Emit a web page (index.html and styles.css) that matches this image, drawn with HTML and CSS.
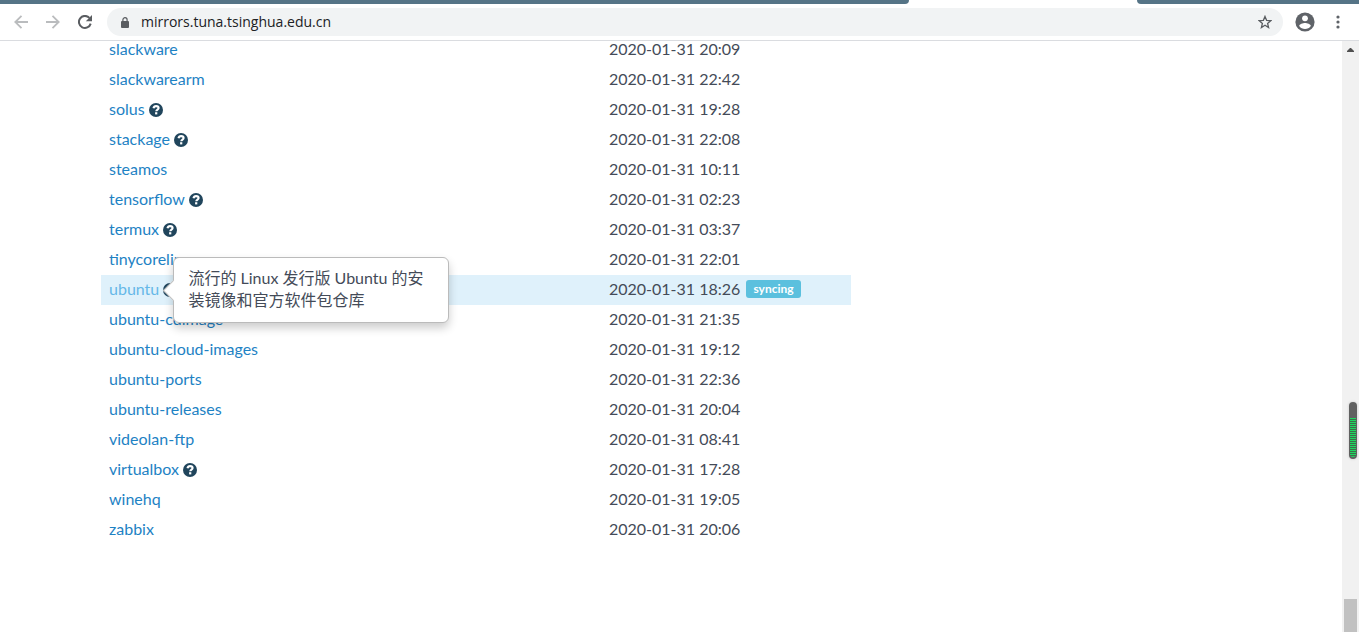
FILE: index.html
```
<!DOCTYPE html>
<html lang="zh-CN">
<head>
    <meta charset="UTF-8">
    <title>mirrors.tuna.tsinghua.edu.cn</title>
    <link rel="stylesheet" href="styles.css">
</head>
<body>
<svg class="defs" width="0" height="0">
    <symbol id="help" viewBox="0 0 14 14">
        <circle cx="7" cy="7" r="7" fill="#20455c"/>
        <path d="M4.5 5.3C4.8 3.8 5.8 3.1 7.1 3.1c1.4 0 2.5.8 2.5 2 0 1.5-2.3 1.5-2.3 3.2" fill="none" stroke="#fff" stroke-width="2.1"/>
        <rect x="6.1" y="9.2" width="2.2" height="2.2" fill="#fff"/>
    </symbol>
</svg>
<div class="tabs">
    <div class="tabs-left"></div>
    <div class="tabs-right"></div>
</div>
<div class="toolbar">
    <button class="nav" aria-label="Back">
        <svg width="14" height="14" viewBox="0 0 14 14" fill="none" stroke="#babcbe" stroke-width="1.8"><path d="M14 7H1.5M7.5 .8L1.3 7l6.2 6.2"/></svg>
    </button>
    <button class="nav" aria-label="Forward">
        <svg width="14" height="14" viewBox="0 0 14 14" fill="none" stroke="#babcbe" stroke-width="1.8"><path d="M0 7h12.5M6.5 .8L12.7 7l-6.2 6.2"/></svg>
    </button>
    <button class="nav" aria-label="Reload">
        <svg width="14" height="14" viewBox="0 0 14 14"><path d="M12.7 8.6A6 6 0 1 1 11.4 2.9" fill="none" stroke="#5a5d61" stroke-width="2"/><path d="M14 0v6.2H7.8z" fill="#5a5d61"/></svg>
    </button>
    <div class="address">
        <svg width="8" height="11" viewBox="0 0 8 11"><rect y="4" width="8" height="7" rx="1" fill="#5a5d61"/><path d="M1.9 4.5V2.8a2.1 2.1 0 0 1 4.2 0v1.7" fill="none" stroke="#5a5d61" stroke-width="1.2"/></svg>
        <input type="text" aria-label="Address" value="mirrors.tuna.tsinghua.edu.cn">
        <button aria-label="Bookmark">
            <svg width="14" height="14" viewBox="0 0 14 14"><path d="M7 1.4l1.6 3.9 4.2.3-3.2 2.8 1 4.1L7 10.3l-3.6 2.2 1-4.1L1.2 5.6l4.2-.3z" fill="none" stroke="#5a5d61" stroke-width="1.3"/></svg>
        </button>
    </div>
    <button class="profile" aria-label="Profile">
        <svg width="20" height="20" viewBox="0 0 20 20"><circle cx="10" cy="10" r="9.6" fill="#5f6368"/><circle cx="10" cy="6.3" r="2.9" fill="#fff"/><path d="M4.2 13.9c0-2 3.9-3 5.8-3s5.8 1 5.8 3a7 7 0 0 1-11.6 0z" fill="#fff"/></svg>
    </button>
    <button class="more" aria-label="Menu">
        <svg width="4" height="14" viewBox="0 0 4 14" fill="#5f6368"><circle cx="2" cy="2" r="1.6"/><circle cx="2" cy="7" r="1.6"/><circle cx="2" cy="12" r="1.6"/></svg>
    </button>
</div>
<div class="window">
    <main class="page">
        <div class="container">
            <table class="mirrors">
                <tr><td><a href="#">slackware</a></td><td>2020-01-31 20:09</td></tr>
                <tr><td><a href="#">slackwarearm</a></td><td>2020-01-31 22:42</td></tr>
                <tr><td><a href="#">solus</a> <svg class="help"><use href="#help"/></svg></td><td>2020-01-31 19:28</td></tr>
                <tr><td><a href="#">stackage</a> <svg class="help"><use href="#help"/></svg></td><td>2020-01-31 22:08</td></tr>
                <tr><td><a href="#">steamos</a></td><td>2020-01-31 10:11</td></tr>
                <tr><td><a href="#">tensorflow</a> <svg class="help"><use href="#help"/></svg></td><td>2020-01-31 02:23</td></tr>
                <tr><td><a href="#">termux</a> <svg class="help"><use href="#help"/></svg></td><td>2020-01-31 03:37</td></tr>
                <tr><td><a href="#">tinycorelinux</a></td><td>2020-01-31 22:01</td></tr>
                <tr class="active">
                    <td>
                        <span class="tip-anchor"><a href="#">ubuntu</a> <svg class="help"><use href="#help"/></svg><span class="popover" role="tooltip">流行的 Linux 发行版 Ubuntu 的安装镜像和官方软件包仓库</span></span>
                    </td>
                    <td>2020-01-31 18:26 <span class="label">syncing</span></td>
                </tr>
                <tr><td><a href="#">ubuntu-cdimage</a></td><td>2020-01-31 21:35</td></tr>
                <tr><td><a href="#">ubuntu-cloud-images</a></td><td>2020-01-31 19:12</td></tr>
                <tr><td><a href="#">ubuntu-ports</a></td><td>2020-01-31 22:36</td></tr>
                <tr><td><a href="#">ubuntu-releases</a></td><td>2020-01-31 20:04</td></tr>
                <tr><td><a href="#">videolan-ftp</a></td><td>2020-01-31 08:41</td></tr>
                <tr><td><a href="#">virtualbox</a> <svg class="help"><use href="#help"/></svg></td><td>2020-01-31 17:28</td></tr>
                <tr><td><a href="#">winehq</a></td><td>2020-01-31 19:05</td></tr>
                <tr><td><a href="#">zabbix</a></td><td>2020-01-31 20:06</td></tr>
            </table>
        </div>
    </main>
    <div class="scrollbar">
        <svg class="up" width="7" height="4" viewBox="0 0 7 4"><path d="M0 4V3L3 0h1l3 3v1z" fill="#505050"/></svg>
        <div class="thumb"></div>
    </div>
</div>
<div class="meter"><div class="meter-level"></div></div>
</body>
</html>
```

FILE: styles.css
```
* {
    box-sizing: border-box;
}

body {
    display: flex;
    flex-direction: column;
    height: 100vh;
    margin: 0;
    overflow: hidden;
    background: #fff;
    color: #444b58;
    font-family: Lato, "Noto Sans CJK SC", sans-serif;
    font-size: 16px;
}

button {
    display: flex;
    padding: 0;
    border: 0;
    background: none;
}

.defs {
    position: absolute;
}

/* browser bar */
.tabs {
    display: flex;
    flex: none;
    gap: 228px;
    height: 4px;
}

.tabs div {
    background: #557486;
}

.tabs-left {
    flex: 1;
    border-bottom-right-radius: 6px;
}

.tabs-right {
    width: 222px;
    border-bottom-left-radius: 6px;
}

.toolbar {
    display: flex;
    flex: none;
    align-items: center;
    height: 37px;
    padding: 0 19px 0 14px;
    border-bottom: 1px solid #dadce0;
}

.nav {
    width: 32px;
}

.address {
    display: flex;
    flex: 1;
    align-items: center;
    height: 28px;
    margin-left: -3px;
    padding: 0 11px 0 14px;
    border-radius: 14px;
    background: #f1f3f4;
}

.address input {
    flex: 1;
    min-width: 0;
    margin-left: 12px;
    padding: 0 0 2px;
    border: 0;
    outline: 0;
    background: none;
    color: #202124;
    font-family: "Open Sans", sans-serif;
    font-size: 14px;
}

.profile {
    margin: 0 21px 0 12px;
}

/* page */
.window {
    display: flex;
    flex: 1;
    min-height: 0;
}

.page {
    flex: 1;
    overflow: hidden;
}

.container {
    max-width: 1140px;
    margin: -6px auto 0;
}

.mirrors {
    width: 750px;
    border-collapse: collapse;
    table-layout: fixed;
}

.mirrors td {
    height: 30px;
    padding: 0 8px 2px;
    line-height: 20px;
    white-space: nowrap;
}

.mirrors td:first-child {
    width: 500px;
}

.mirrors a {
    color: #1e82c4;
    text-decoration: none;
}

.mirrors .active {
    background: #dff1fb;
}

.mirrors .active a {
    color: #65b8e8;
}

.help {
    width: 14px;
    height: 14px;
    vertical-align: -2px;
}

.label {
    display: inline-block;
    padding: 0 7px 1px;
    margin-left: 2px;
    border-radius: 3px;
    background: #5bc0de;
    color: #fff;
    font-size: 12px;
    font-weight: bold;
    line-height: 17px;
    vertical-align: 2px;
}

.tip-anchor {
    display: inline-block;
    position: relative;
}

.popover {
    position: absolute;
    top: 50%;
    left: 100%;
    z-index: 1;
    width: 276px;
    margin: 1px 0 0 -4px;
    padding: 9px 14px 11px;
    border: 1px solid #bbb;
    border-radius: 6px;
    background: #fff;
    box-shadow: 0 5px 10px rgba(0, 0, 0, .2);
    line-height: 22px;
    white-space: normal;
    transform: translateY(-50%);
}

.popover::before {
    content: "";
    position: absolute;
    top: 50%;
    left: -8px;
    width: 14px;
    height: 14px;
    margin-top: -7px;
    border: solid #bbb;
    border-width: 0 0 1px 1px;
    background: #fff;
    transform: rotate(45deg);
}

/* scrollbar */
.scrollbar {
    display: flex;
    flex-direction: column;
    align-items: center;
    justify-content: space-between;
    width: 17px;
    padding: 7px 2px 0;
    background: #f1f1f1;
}

.thumb {
    width: 13px;
    height: 33px;
    background: #c1c1c1;
}

/* level meter floating over the scrollbar */
.meter {
    position: absolute;
    top: 402px;
    right: 2px;
    width: 8px;
    height: 57px;
    padding: 16px 1px 2px;
    border-radius: 4px;
    background: #606060;
    box-shadow: 0 0 2px 1px #ddd;
}

.meter-level {
    height: 100%;
    border-radius: 0 0 3px 3px;
    background: repeating-linear-gradient(#1ed760 0, #1ed760 1px, #3c6e4a 1px, #3c6e4a 2px);
}
```
